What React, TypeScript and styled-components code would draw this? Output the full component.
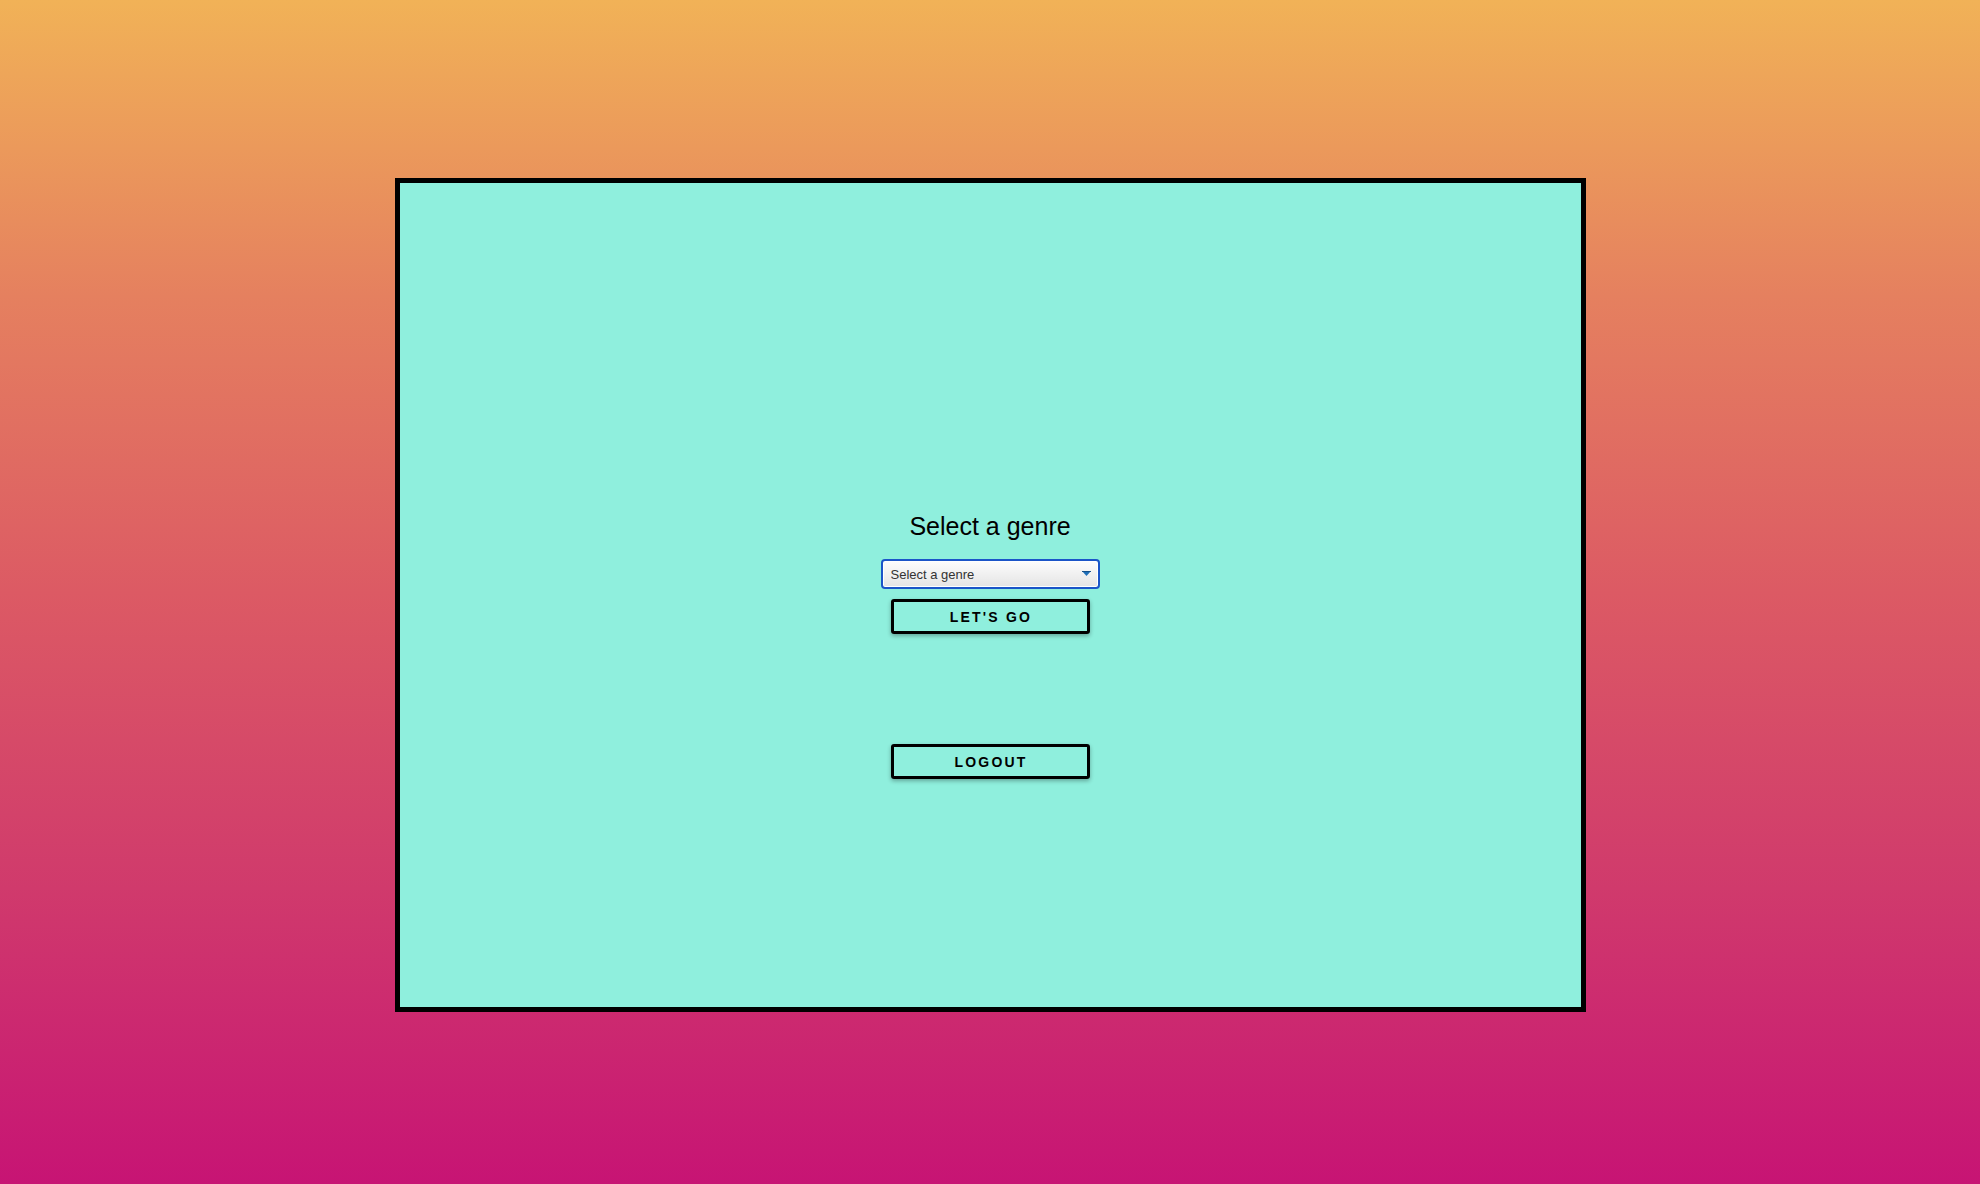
import React from "react";
import styled, { createGlobalStyle } from "styled-components";

const Global = createGlobalStyle`
  html, body {
    margin: 0;
    padding: 0;
    min-height: 100vh;
  }
  body {
    font-family: "Liberation Sans", Arial, sans-serif;
    background: linear-gradient(180deg, #f1b257 0%, #e5805f 25%, #dc5a64 50%, #d03a6c 75%, #c71474 100%);
    background-attachment: fixed;
  }
  #root {
    min-height: 100vh;
  }
`;

const Page = styled.div`
  min-height: 1184px;
  display: flex;
  justify-content: center;
  align-items: flex-start;
  padding-top: 178px;
  box-sizing: border-box;
`;

const Panel = styled.main`
  width: 1191px;
  height: 834px;
  box-sizing: border-box;
  border: 5px solid #000;
  background: #8fefdd;
  display: flex;
  flex-direction: column;
  align-items: center;
  padding-top: 329px;
`;

const Heading = styled.h2`
  margin: 0;
  font-size: 25px;
  line-height: 28px;
  font-weight: 400;
  color: #000;
`;

const SelectWrap = styled.div`
  position: relative;
  margin-top: 19px;
  width: 219px;
  height: 30px;
`;

const GenreSelect = styled.select`
  appearance: none;
  -webkit-appearance: none;
  width: 100%;
  height: 100%;
  box-sizing: border-box;
  border: 2px solid #1b55c8;
  border-radius: 4px;
  box-shadow: inset 0 0 0 1px #ffffff;
  background: linear-gradient(180deg, #fdfdfd 0%, #e4e4e4 100%);
  font-family: "Liberation Sans", Arial, sans-serif;
  font-size: 13px;
  color: #333;
  padding: 0 24px 0 8px;
  outline: none;
`;

const Arrow = styled.svg`
  position: absolute;
  right: 9px;
  top: 12px;
  width: 9px;
  height: 5px;
  pointer-events: none;
`;

const ActionButton = styled.button<{ $gap: number }>`
  margin-top: ${(p) => p.$gap}px;
  width: 199px;
  height: 35px;
  box-sizing: border-box;
  border: 3px solid #000;
  border-radius: 3px;
  background: transparent;
  box-shadow: 0 2px 4px rgba(0, 0, 0, 0.3);
  font-family: "Liberation Sans", Arial, sans-serif;
  font-weight: 700;
  font-size: 14px;
  letter-spacing: 2.2px;
  color: #000;
  text-transform: uppercase;
  padding: 0 0 0 2px;
  cursor: pointer;
`;

export default function App() {
  return (
    <>
      <Global />
      <Page>
        <Panel>
          <Heading>Select a genre</Heading>
          <SelectWrap>
            <GenreSelect defaultValue="">
              <option value="">Select a genre</option>
              <option value="rock">Rock</option>
              <option value="pop">Pop</option>
              <option value="jazz">Jazz</option>
            </GenreSelect>
            <Arrow viewBox="0 0 9 5">
              <path d="M0 0 H9 L4.5 5 Z" fill="#1f6fb8" />
              <rect x="0" y="0" width="9" height="1" fill="#15508a" />
            </Arrow>
          </SelectWrap>
          <ActionButton $gap={10}>Let's go</ActionButton>
          <ActionButton $gap={110}>Logout</ActionButton>
        </Panel>
      </Page>
    </>
  );
}
